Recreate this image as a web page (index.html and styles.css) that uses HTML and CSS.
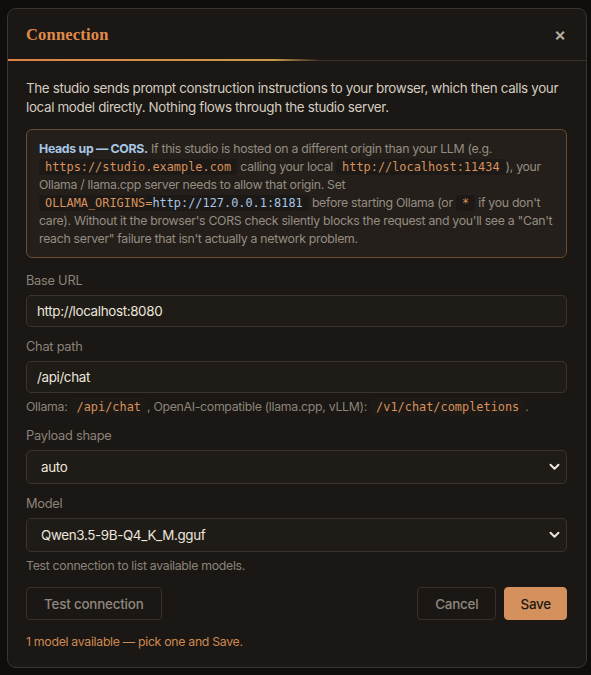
FILE: index.html
```html
<!DOCTYPE html>
<html>
<head>
<meta charset="utf-8">
<link rel="stylesheet" href="styles.css">
</head>
<body>
<div class="dialog">
  <div class="header">
    <h2 class="title">Connection</h2>
    <span class="close">×</span>
  </div>
  <div class="body">
    <p class="intro">The studio sends prompt construction instructions to your browser, which then calls your local model directly. Nothing flows through the studio server.</p>
    <div class="callout">
      <b class="callout-head">Heads up — CORS.</b> If this studio is hosted on a different origin than your LLM (e.g. <code>https://studio.example.com</code> calling your local <code>http://localhost:11434</code>), your Ollama / llama.cpp server needs to allow that origin. Set <code>OLLAMA_ORIGINS=<span class="blue">http://127.0.0.1:8181</span></code> before starting Ollama (or <code>*</code> if you don't care). Without it the browser's CORS check silently blocks the request and you'll see a "Can't reach server" failure that isn't actually a network problem.
    </div>
    <div class="fields">
      <div class="field">
        <label class="label">Base URL</label>
        <input class="input" type="text" value="http://localhost:8080">
      </div>
      <div class="field">
        <label class="label">Chat path</label>
        <input class="input" type="text" value="/api/chat">
        <div class="hint">Ollama: <code>/api/chat</code>, OpenAI-compatible (llama.cpp, vLLM): <code>/v1/chat/completions</code>.</div>
      </div>
      <div class="field">
        <label class="label">Payload shape</label>
        <div class="select-wrap">
          <select class="select"><option>auto</option></select>
          <svg class="chev" width="11" height="8" viewBox="0 0 11 8"><path d="M1.5 1.8 L5.5 5.8 L9.5 1.8" fill="none" stroke="#ece6dc" stroke-width="2" stroke-linecap="round" stroke-linejoin="round"/></svg>
        </div>
      </div>
      <div class="field">
        <label class="label">Model</label>
        <div class="select-wrap">
          <select class="select"><option>Qwen3.5-9B-Q4_K_M.gguf</option></select>
          <svg class="chev" width="11" height="8" viewBox="0 0 11 8"><path d="M1.5 1.8 L5.5 5.8 L9.5 1.8" fill="none" stroke="#ece6dc" stroke-width="2" stroke-linecap="round" stroke-linejoin="round"/></svg>
        </div>
        <div class="hint">Test connection to list available models.</div>
      </div>
    </div>
    <div class="actions">
      <button class="btn ghost test">Test connection</button>
      <div class="right">
        <button class="btn ghost cancel">Cancel</button>
        <button class="btn primary">Save</button>
      </div>
    </div>
    <div class="status">1 model available — pick one and Save.</div>
  </div>
</div>
</body>
</html>
```

FILE: styles.css
```css
* { box-sizing: border-box; }
html, body { margin: 0; padding: 0; }
body {
  background: #0f0e0c;
  font-family: Inter, "Noto Sans", sans-serif;
  color: #d8d0c4;
  padding: 8px 0 0 7px;
  height: 675px;
  overflow: hidden;
}
.dialog {
  width: 580px;
  background: #1a1714;
  border: 1px solid #3a342b;
  border-radius: 9px;
  height: 660px;
}
.header {
  display: flex;
  align-items: center;
  justify-content: space-between;
  height: 52px;
  padding: 0 20px 0 18px;
  position: relative;
  border-bottom: 1px solid #3a3329;
}
.header::after {
  content: "";
  position: absolute;
  left: 0; right: 0; bottom: -1px;
  height: 2px;
  background: linear-gradient(90deg, #dd8446 0%, #c99a4c 46%, rgba(201,154,76,0) 54%);
}
.title {
  margin: 0;
  font-family: "Liberation Serif", "DejaVu Serif", serif;
  font-weight: 700;
  font-size: 16.5px;
  color: #e08a4c;
  letter-spacing: 0.2px;
}
.close {
  color: #b5ada2;
  font-size: 18px;
  line-height: 1;
  font-weight: 600;
}
.body {
  padding: 18px 19px 0 18px;
}
.intro {
  margin: 0 0 12px;
  font-size: 13.4px;
  line-height: 19px;
  letter-spacing: -0.35px;
  color: #d4ccc0;
}
.callout {
  background: #241f1a;
  border: 1px solid #6a4a30;
  border-radius: 6px;
  padding: 10px 12px 9px;
  font-size: 12.3px;
  line-height: 18px;
  color: #958d82;
  letter-spacing: -0.3px;
}
.callout-head { color: #a8c6e6; font-weight: 700; }
code {
  font-family: "DejaVu Sans Mono", "Liberation Mono", monospace;
  font-size: 11.9px;
  color: #d9925a;
  background: #1c1916;
  border-radius: 3px;
  padding: 1px 6px;
  letter-spacing: 0;
}
.blue { color: #a8c6e6; }
.fields {
  display: flex;
  flex-direction: column;
  gap: 11px;
  margin-top: 14px;
}
.field { display: flex; flex-direction: column; }
.label {
  font-size: 12.8px;
  line-height: 18px;
  color: #8c8479;
  margin-bottom: 5px;
  letter-spacing: -0.25px;
}
.input, .select {
  width: 100%;
  background: #1f1c17;
  border: 1px solid #3a352c;
  border-radius: 5px;
  color: #ece6dc;
  font-family: Inter, "Noto Sans", sans-serif;
  font-size: 13.4px;
  letter-spacing: -0.35px;
  outline: none;
}
.input { height: 32px; padding: 0 10px; }
.select-wrap { position: relative; }
.select {
  appearance: none;
  -webkit-appearance: none;
  height: 34px;
  padding: 0 14px;
}
.chev { position: absolute; right: 7px; top: 13px; pointer-events: none; }
.hint {
  margin-top: 5px;
  font-size: 12.3px;
  line-height: 18px;
  color: #8c8479;
  letter-spacing: -0.3px;
}
.hint code { padding: 2px 6px; }
.actions {
  display: flex;
  justify-content: space-between;
  margin-top: 12px;
}
.right { display: flex; gap: 8px; }
.btn {
  height: 33px;
  border-radius: 4px;
  font-family: Inter, "Noto Sans", sans-serif;
  font-size: 13.4px;
  font-weight: 500;
  letter-spacing: -0.2px;
  padding: 0 16px;
}
.ghost {
  background: transparent;
  border: 1px solid #38322a;
  color: #8f887e;
}
.test { padding: 0 17px; }
.cancel { padding: 0 17px; }
.primary {
  background: #d4915d;
  border: 1px solid #d4915d;
  color: #1c1712;
  padding: 0 15px;
}
.status {
  margin-top: 13px;
  font-size: 12.3px;
  line-height: 18px;
  color: #cf8a52;
  letter-spacing: -0.3px;
}
```
